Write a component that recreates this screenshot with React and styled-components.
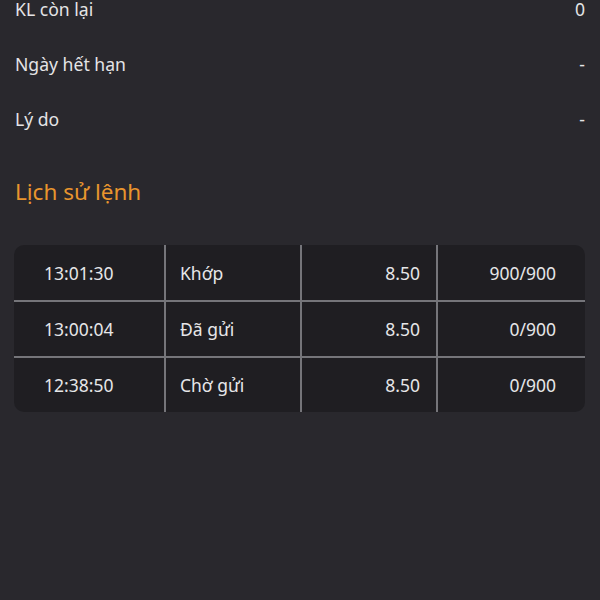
import React from "react";
import styled, { createGlobalStyle } from "styled-components";

const GlobalStyle = createGlobalStyle`
  html, body {
    margin: 0;
    padding: 0;
    background: #29282d;
  }
  body {
    font-family: "Noto Sans", "Open Sans", sans-serif;
  }
`;

const Page = styled.div`
  width: 600px;
  height: 600px;
  overflow: hidden;
  background: #29282d;
  padding: 0 15px 0 14px;
  box-sizing: border-box;
`;

const InfoList = styled.div`
  display: flex;
  flex-direction: column;
  margin-top: -19px;
`;

const InfoRow = styled.div`
  display: flex;
  justify-content: space-between;
  align-items: center;
  height: 55px;
  font-size: 17.6px;
  color: #e4e4e6;
`;

const Label = styled.span`
  padding-left: 1px;
`;

const Value = styled.span`
  color: #e4e4e6;
`;

const Title = styled.h2`
  margin: 30px 0 0 1px;
  font-size: 22.5px;
  line-height: 32px;
  font-weight: 400;
  color: #e8952d;
`;

const Table = styled.div`
  margin-top: 37px;
  background: #1f1e22;
  border-radius: 10px;
  display: flex;
  flex-direction: column;
`;

const Row = styled.div`
  display: grid;
  grid-template-columns: 150px 136px 136px 1fr;
  height: 56px;
  border-top: ${(p) => (p.$first ? "none" : "2px solid #75757a")};
  box-sizing: border-box;
  &:first-child {
    height: 55px;
  }
`;

const Cell = styled.div`
  display: flex;
  align-items: center;
  justify-content: ${(p) => (p.$align === "right" ? "flex-end" : "flex-start")};
  padding: 0 16px 0 14px;
  font-size: 17.5px;
  color: #e6e6e8;
  border-left: 2px solid #75757a;
  box-sizing: border-box;
  &:first-child {
    border-left: none;
    padding-left: 30px;
  }
  &:last-child {
    padding-right: 29px;
  }
`;

const info = [
  ["KL còn lại", "0"],
  ["Ngày hết hạn", "-"],
  ["Lý do", "-"],
];

const history = [
  ["13:01:30", "Khớp", "8.50", "900/900"],
  ["13:00:04", "Đã gửi", "8.50", "0/900"],
  ["12:38:50", "Chờ gửi", "8.50", "0/900"],
];

export default function App() {
  return (
    <Page>
      <GlobalStyle />
      <InfoList>
        {info.map(([label, value]) => (
          <InfoRow key={label}>
            <Label>{label}</Label>
            <Value>{value}</Value>
          </InfoRow>
        ))}
      </InfoList>
      <Title>Lịch sử lệnh</Title>
      <Table>
        {history.map((r, i) => (
          <Row key={r[0]} $first={i === 0}>
            <Cell>{r[0]}</Cell>
            <Cell>{r[1]}</Cell>
            <Cell $align="right">{r[2]}</Cell>
            <Cell $align="right">{r[3]}</Cell>
          </Row>
        ))}
      </Table>
    </Page>
  );
}
